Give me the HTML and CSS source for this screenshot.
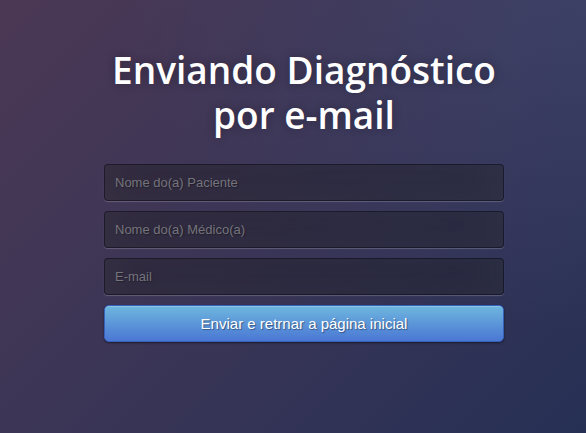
FILE: index.html
```html
<!DOCTYPE html>
<html lang="pt-BR">
<head>
<meta charset="utf-8">
<title>Enviando Diagnóstico por e-mail</title>
<link rel="stylesheet" href="styles.css">
</head>
<body>
<main class="page">
  <div class="login">
    <h1 class="title">Enviando Diagnóstico<br>por e-mail</h1>
    <form class="form">
      <input class="field" type="text" placeholder="Nome do(a) Paciente">
      <input class="field" type="text" placeholder="Nome do(a) Médico(a)">
      <input class="field" type="email" placeholder="E-mail">
      <button class="btn" type="button">Enviar e retrnar a página inicial</button>
    </form>
  </div>
</main>
</body>
</html>
```

FILE: styles.css
```css
* { box-sizing: border-box; }
html, body { margin: 0; height: 100%; }
body {
  width: 100%;
  height: 100%;
  overflow: hidden;
  font-family: "Liberation Sans", Arial, sans-serif;
  background: #383554;
  background:
    radial-gradient(ellipse at 100% 0%, rgba(70,86,130,.35) 0%, rgba(70,86,130,0) 55%),
    linear-gradient(135deg, #4b3855 0%, #3a3556 50%, #263055 100%);
}
.page {
  display: flex;
  justify-content: center;
  padding-left: 22px;
  padding-top: 47px;
}
.login { width: 400px; }
.title {
  margin: 0 0 27px;
  color: #fff;
  font-family: "Open Sans", sans-serif;
  font-weight: 600;
  font-size: 37px;
  line-height: 45px;
  letter-spacing: 0;
  text-align: center;
  text-shadow: 0 0 10px rgba(0,0,0,.3);
}
.form { display: flex; flex-direction: column; gap: 10px; }
.field {
  width: 100%;
  height: 37px;
  margin: 0;
  padding: 10px;
  background: rgba(0,0,0,.3);
  border: 1px solid rgba(0,0,0,.3);
  border-radius: 4px;
  outline: none;
  font-family: "Liberation Sans", Arial, sans-serif;
  font-size: 13px;
  color: #fff;
  text-shadow: 1px 1px 1px rgba(0,0,0,.3);
  box-shadow: inset 0 -5px 45px rgba(100,100,100,.2), 0 1px 1px rgba(255,255,255,.2);
}
.field::placeholder { color: #74747c; }
.btn {
  width: 100%;
  height: 37px;
  padding: 0 14px;
  font-family: "Liberation Sans", Arial, sans-serif;
  font-size: 15px;
  color: #fff;
  text-shadow: 1px 1px 1px rgba(0,0,0,.4);
  background-color: #4a77d4;
  background-image: linear-gradient(to bottom, #6eb6de, #4a77d4);
  border: 1px solid #3762bc;
  border-radius: 5px;
  box-shadow: inset 0 1px 0 rgba(255,255,255,.2), 0 1px 2px rgba(0,0,0,.5);
  cursor: pointer;
}
```
